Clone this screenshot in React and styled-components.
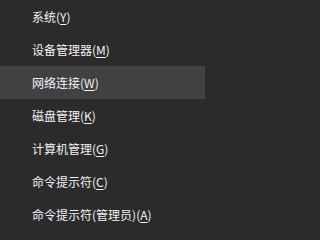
import React from "react";
import styled, { createGlobalStyle } from "styled-components";

const Global = createGlobalStyle`
  html, body { margin: 0; padding: 0; background: #2b2b2b; }
  #root { width: 205px; height: 231px; }
`;

const Menu = styled.ul`
  list-style: none;
  margin: 0;
  padding: 0;
  width: 205px;
  display: flex;
  flex-direction: column;
  background: #2b2b2b;
  font-family: "Microsoft YaHei", "Noto Sans CJK SC", "Noto Sans", sans-serif;
  font-size: 12px;
  color: #f2f2f2;
`;

const Item = styled.li`
  height: 33px;
  display: flex;
  align-items: center;
  padding-left: 32px;
  background: ${(p) => (p.$hover ? "#414141" : "transparent")};
  white-space: nowrap;
`;

const Key = styled.span`
  text-decoration: underline;
  text-underline-offset: 2px;
`;

const items = [
  { label: "系统", key: "Y" },
  { label: "设备管理器", key: "M" },
  { label: "网络连接", key: "W", hover: true },
  { label: "磁盘管理", key: "K" },
  { label: "计算机管理", key: "G" },
  { label: "命令提示符", key: "C" },
  { label: "命令提示符(管理员)", key: "A" },
];

export default function App() {
  return (
    <>
      <Global />
      <Menu>
        {items.map((it) => (
          <Item key={it.label + it.key} $hover={it.hover}>
            {it.label}(<Key>{it.key}</Key>)
          </Item>
        ))}
      </Menu>
    </>
  );
}
